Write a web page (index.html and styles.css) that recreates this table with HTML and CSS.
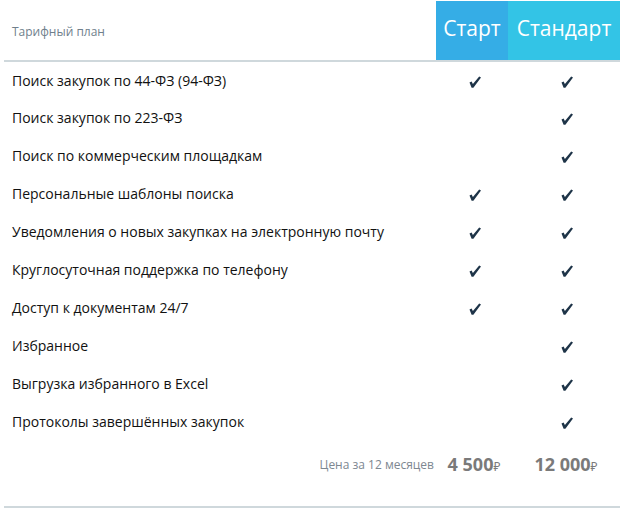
FILE: index.html
```html
<!DOCTYPE html>
<html lang="ru">
<head>
<meta charset="utf-8">
<link rel="stylesheet" href="styles.css">
</head>
<body>
<table class="plans">
  <thead>
    <tr>
      <th class="label">Тарифный план</th>
      <th class="plan start">Старт</th>
      <th class="plan standard">Стандарт</th>
    </tr>
  </thead>
  <tbody>
    <tr><td class="feat">Поиск закупок по 44-ФЗ (94-ФЗ)</td><td class="mark"><svg class="chk" viewBox="0 0 12 12"><path d="M0.5 6.5 L2.6 5.4 L3.9 8 L10.2 0.4 L12 1.6 L4.4 11.7 L2.6 11.7 Z"/></svg></td><td class="mark"><svg class="chk" viewBox="0 0 12 12"><path d="M0.5 6.5 L2.6 5.4 L3.9 8 L10.2 0.4 L12 1.6 L4.4 11.7 L2.6 11.7 Z"/></svg></td></tr>
    <tr><td class="feat">Поиск закупок по 223-ФЗ</td><td class="mark"></td><td class="mark"><svg class="chk" viewBox="0 0 12 12"><path d="M0.5 6.5 L2.6 5.4 L3.9 8 L10.2 0.4 L12 1.6 L4.4 11.7 L2.6 11.7 Z"/></svg></td></tr>
    <tr><td class="feat">Поиск по коммерческим площадкам</td><td class="mark"></td><td class="mark"><svg class="chk" viewBox="0 0 12 12"><path d="M0.5 6.5 L2.6 5.4 L3.9 8 L10.2 0.4 L12 1.6 L4.4 11.7 L2.6 11.7 Z"/></svg></td></tr>
    <tr><td class="feat">Персональные шаблоны поиска</td><td class="mark"><svg class="chk" viewBox="0 0 12 12"><path d="M0.5 6.5 L2.6 5.4 L3.9 8 L10.2 0.4 L12 1.6 L4.4 11.7 L2.6 11.7 Z"/></svg></td><td class="mark"><svg class="chk" viewBox="0 0 12 12"><path d="M0.5 6.5 L2.6 5.4 L3.9 8 L10.2 0.4 L12 1.6 L4.4 11.7 L2.6 11.7 Z"/></svg></td></tr>
    <tr><td class="feat">Уведомления о новых закупках на электронную почту</td><td class="mark"><svg class="chk" viewBox="0 0 12 12"><path d="M0.5 6.5 L2.6 5.4 L3.9 8 L10.2 0.4 L12 1.6 L4.4 11.7 L2.6 11.7 Z"/></svg></td><td class="mark"><svg class="chk" viewBox="0 0 12 12"><path d="M0.5 6.5 L2.6 5.4 L3.9 8 L10.2 0.4 L12 1.6 L4.4 11.7 L2.6 11.7 Z"/></svg></td></tr>
    <tr><td class="feat">Круглосуточная поддержка по телефону</td><td class="mark"><svg class="chk" viewBox="0 0 12 12"><path d="M0.5 6.5 L2.6 5.4 L3.9 8 L10.2 0.4 L12 1.6 L4.4 11.7 L2.6 11.7 Z"/></svg></td><td class="mark"><svg class="chk" viewBox="0 0 12 12"><path d="M0.5 6.5 L2.6 5.4 L3.9 8 L10.2 0.4 L12 1.6 L4.4 11.7 L2.6 11.7 Z"/></svg></td></tr>
    <tr><td class="feat">Доступ к документам 24/7</td><td class="mark"><svg class="chk" viewBox="0 0 12 12"><path d="M0.5 6.5 L2.6 5.4 L3.9 8 L10.2 0.4 L12 1.6 L4.4 11.7 L2.6 11.7 Z"/></svg></td><td class="mark"><svg class="chk" viewBox="0 0 12 12"><path d="M0.5 6.5 L2.6 5.4 L3.9 8 L10.2 0.4 L12 1.6 L4.4 11.7 L2.6 11.7 Z"/></svg></td></tr>
    <tr><td class="feat">Избранное</td><td class="mark"></td><td class="mark"><svg class="chk" viewBox="0 0 12 12"><path d="M0.5 6.5 L2.6 5.4 L3.9 8 L10.2 0.4 L12 1.6 L4.4 11.7 L2.6 11.7 Z"/></svg></td></tr>
    <tr><td class="feat">Выгрузка избранного в Excel</td><td class="mark"></td><td class="mark"><svg class="chk" viewBox="0 0 12 12"><path d="M0.5 6.5 L2.6 5.4 L3.9 8 L10.2 0.4 L12 1.6 L4.4 11.7 L2.6 11.7 Z"/></svg></td></tr>
    <tr><td class="feat">Протоколы завершённых закупок</td><td class="mark"></td><td class="mark"><svg class="chk" viewBox="0 0 12 12"><path d="M0.5 6.5 L2.6 5.4 L3.9 8 L10.2 0.4 L12 1.6 L4.4 11.7 L2.6 11.7 Z"/></svg></td></tr>
  </tbody>
  <tfoot>
    <tr>
      <td class="price-label">Цена за 12 месяцев</td>
      <td class="price">4 500<span class="rub">₽</span></td>
      <td class="price">12 000<span class="rub">₽</span></td>
    </tr>
  </tfoot>
</table>
</body>
</html>
```

FILE: styles.css
```css
html, body {
  margin: 0;
  padding: 0;
  background: #fff;
}
body {
  padding: 1px 0 0 4px;
  font-family: "Open Sans", "Noto Sans", sans-serif;
  color: #111;
}
.plans {
  width: 616px;
  border-collapse: collapse;
  table-layout: fixed;
}
.plans th, .plans td {
  padding: 0;
}
.label {
  width: 424px;
  text-align: left;
  font-weight: normal;
  font-size: 12px;
  color: #6f7f8c;
  padding-left: 8px !important;
  padding-top: 1px !important;
  height: 58px;
  border-bottom: 2px solid #cfd8dc;
}
.plan {
  font-weight: normal;
  font-size: 21px;
  color: #fff;
  text-align: center;
  vertical-align: middle;
  padding-bottom: 6px !important;
  border-bottom: 2px solid #cfd8dc;
}
.start {
  width: 72px;
  background: #35ade6;
}
.standard {
  width: 112px;
  background: #33c4e6;
}
.feat {
  font-size: 14px;
  height: 38px;
  padding-left: 8px !important;
  vertical-align: middle;
}
tbody tr:first-child td {
  height: 36px;
}
.mark {
  text-align: center;
  vertical-align: middle;
  padding-left: 6px !important;
}
.chk {
  width: 12px;
  height: 12px;
  fill: #1e3448;
  display: inline-block;
  vertical-align: middle;
}
tfoot td {
  height: 44px;
  vertical-align: middle;
  border-bottom: 2px solid #cfd8dc;
  padding-bottom: 20px !important;
  padding-top: 2px !important;
}
.price-label {
  text-align: right;
  font-size: 12px;
  color: #7d8791;
  padding-right: 2px !important;
}
.price {
  text-align: center;
  font-weight: bold;
  font-size: 18px;
  color: #7a7a7a;
  padding-left: 4px !important;
}
.rub {
  font-size: 12px;
  font-weight: normal;
}
```
